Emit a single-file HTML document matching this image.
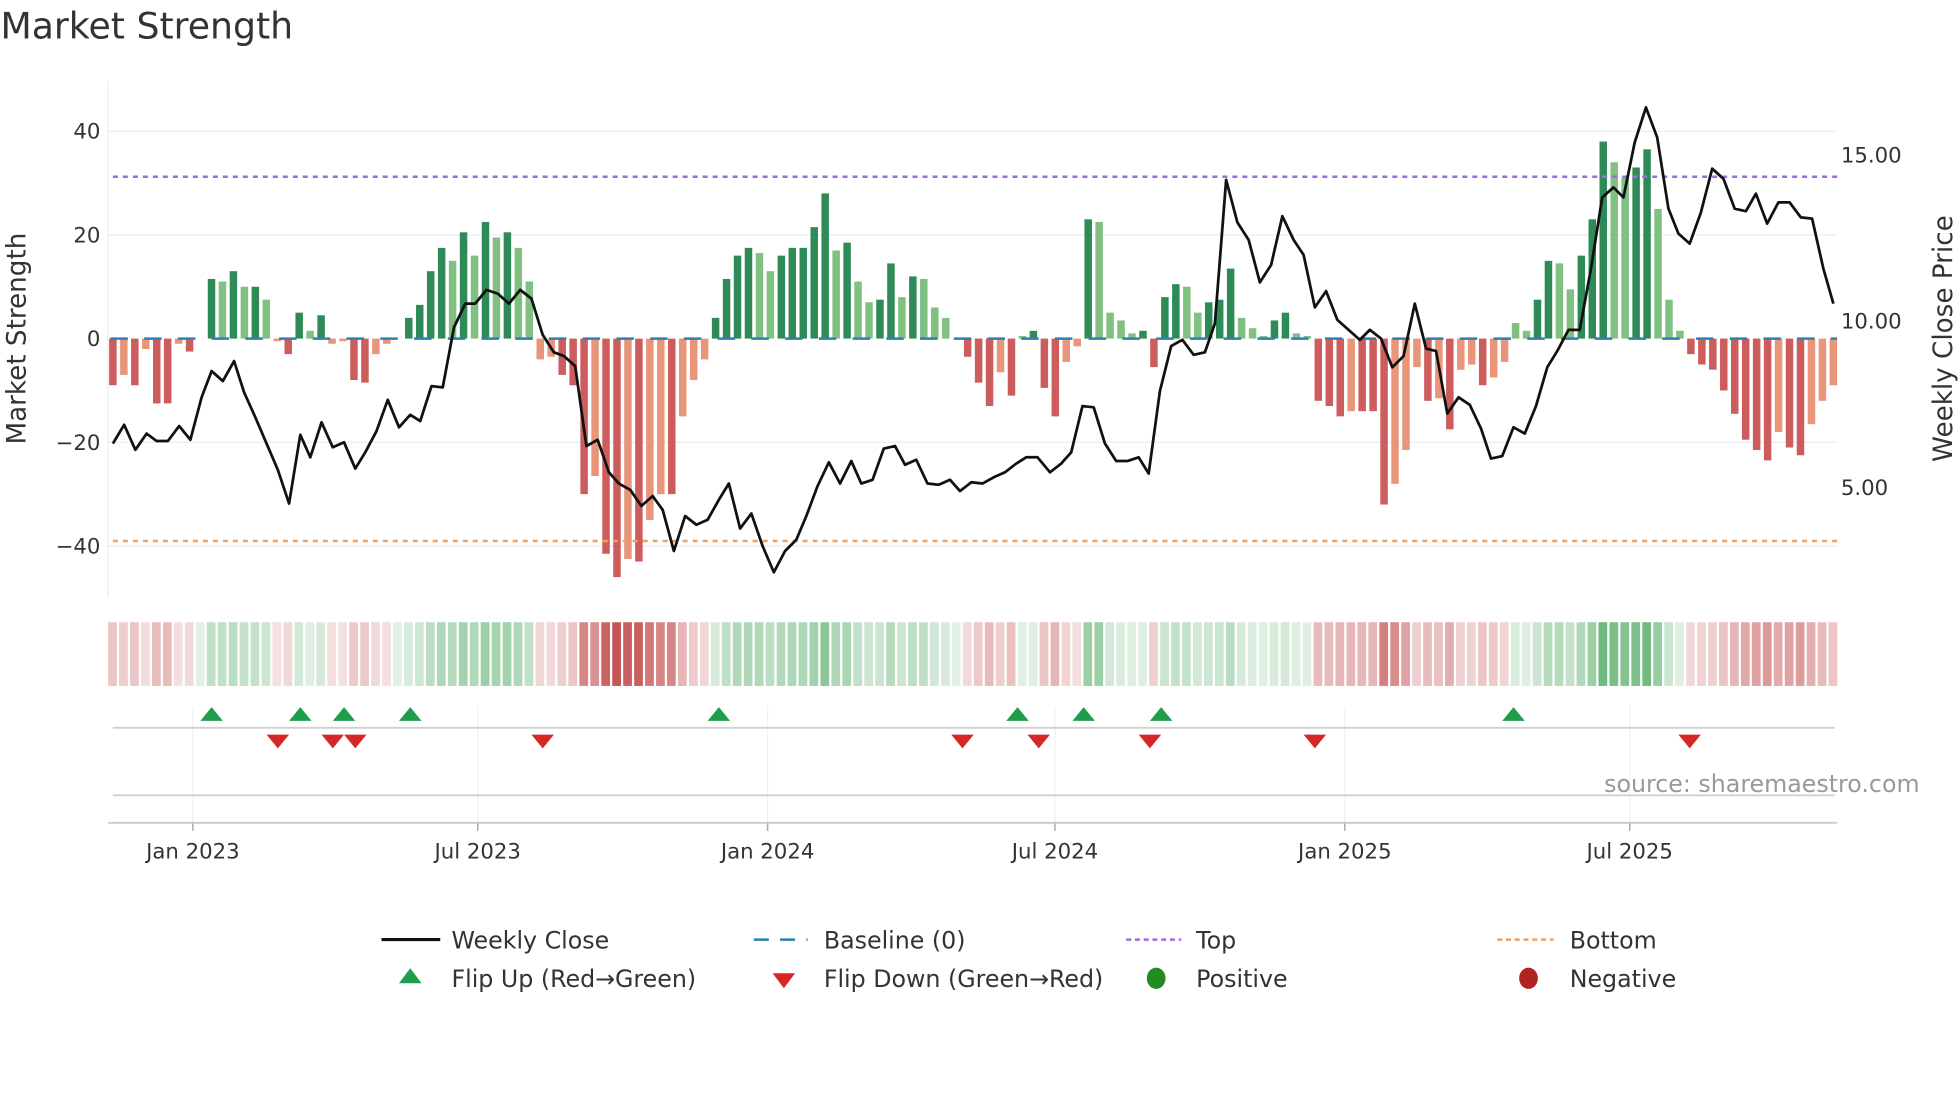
<!DOCTYPE html>
<html><head><meta charset="utf-8"><style>
html,body{margin:0;padding:0;background:#fff;width:1960px;height:1102px;overflow:hidden}
svg{display:block}
text{font-family:"DejaVu Sans","Liberation Sans",sans-serif;fill:#333}
</style></head><body>
<svg id="s" width="1960" height="1102" viewBox="0 0 1568 882" xmlns="http://www.w3.org/2000/svg">
<text x="0" y="31" font-size="29">Market Strength</text>
<g stroke="#ececf2" stroke-width="1">
<line x1="86" x2="1470" y1="105" y2="105"/><line x1="86" x2="1470" y1="188" y2="188"/>
<line x1="86" x2="1470" y1="354" y2="354"/><line x1="86" x2="1470" y1="437" y2="437"/>
<line x1="86" x2="86" y1="65" y2="478"/>
</g>
<g stroke="#eef0f6" stroke-width="1">
<line x1="154" x2="154" y1="565" y2="658"/><line x1="382" x2="382" y1="565" y2="658"/>
<line x1="614" x2="614" y1="565" y2="658"/><line x1="844" x2="844" y1="565" y2="658"/>
<line x1="1076" x2="1076" y1="565" y2="658"/><line x1="1304" x2="1304" y1="565" y2="658"/>
</g>
<g font-size="17" text-anchor="end">
<text x="80" y="111">40</text><text x="80" y="194">20</text><text x="80" y="277">0</text>
<text x="80" y="360">−20</text><text x="80" y="443">−40</text>
</g>
<g font-size="17">
<text x="1473" y="130">15.00</text><text x="1473" y="263">10.00</text><text x="1473" y="396">5.00</text>
</g>
<text font-size="21" text-anchor="middle" transform="translate(20,271) rotate(-90)">Market Strength</text>
<text font-size="21" text-anchor="middle" transform="translate(1562,271) rotate(-90)">Weekly Close Price</text>
<g id="bars"></g>
<line x1="88" x2="1470" y1="271" y2="271" stroke="#2f7fb0" stroke-width="2" stroke-dasharray="14,13" id="base"/>
<line x1="90" x2="1470" y1="141.5" y2="141.5" stroke="#9b6ee0" stroke-width="2" stroke-dasharray="4,4"/>
<line x1="90" x2="1470" y1="433" y2="433" stroke="#f0a060" stroke-width="2" stroke-dasharray="4,4"/>
<polyline id="price" fill="none" stroke="#111" stroke-width="2.2" stroke-linejoin="round"/>
<g id="band"></g>
<line x1="90" x2="1468" y1="582.5" y2="582.5" stroke="#d0d0d0" stroke-width="1.5"/>
<line x1="90" x2="1468" y1="636.5" y2="636.5" stroke="#d0d0d0" stroke-width="1.5"/>
<line x1="86" x2="1470" y1="658.5" y2="658.5" stroke="#ccc" stroke-width="1.5"/>
<g stroke="#aaa" stroke-width="1.2">
<line x1="154" x2="154" y1="659" y2="665"/><line x1="382" x2="382" y1="659" y2="665"/>
<line x1="614" x2="614" y1="659" y2="665"/><line x1="844" x2="844" y1="659" y2="665"/>
<line x1="1076" x2="1076" y1="659" y2="665"/><line x1="1304" x2="1304" y1="659" y2="665"/>
</g>
<g id="flips"></g>
<g font-size="17" text-anchor="middle">
<text x="154" y="687">Jan 2023</text><text x="382" y="687">Jul 2023</text><text x="614" y="687">Jan 2024</text>
<text x="844" y="687">Jul 2024</text><text x="1076" y="687">Jan 2025</text><text x="1304" y="687">Jul 2025</text>
</g>
<text x="1536" y="634" font-size="19" text-anchor="end" style="fill:#999">source: sharemaestro.com</text>
<g font-size="19">
<line x1="305" x2="352" y1="752" y2="752" stroke="#111" stroke-width="2.5"/>
<text x="361" y="759">Weekly Close</text>
<line x1="603" x2="646" y1="752" y2="752" stroke="#2f7fb0" stroke-width="2" stroke-dasharray="12,9"/>
<text x="659" y="759">Baseline (0)</text>
<line x1="901" x2="945" y1="752" y2="752" stroke="#9b6ee0" stroke-width="2" stroke-dasharray="4,3"/>
<text x="957" y="759">Top</text>
<line x1="1198" x2="1243" y1="752" y2="752" stroke="#f0a060" stroke-width="2" stroke-dasharray="4,3"/>
<text x="1256" y="759">Bottom</text>
<polygon points="319,787 337,787 328,775" fill="#1e9e4a"/>
<text x="361" y="790">Flip Up (Red→Green)</text>
<polygon points="618,779 636,779 627,791" fill="#d62728"/>
<text x="659" y="790">Flip Down (Green→Red)</text>
<ellipse cx="925" cy="783" rx="7.5" ry="8.5" fill="#228b22"/>
<text x="957" y="790">Positive</text>
<ellipse cx="1223" cy="783" rx="7.5" ry="8.5" fill="#b22222"/>
<text x="1256" y="790">Negative</text>
</g>
</svg>
<script>
var v=[-9,-7,-9,-2,-12.5,-12.5,-1,-2.5,0,11.5,11,13,10,10,7.5,-0.5,-3,5,1.5,4.5,-1,-0.5,-8,-8.5,-3,-1,0,4,6.5,13,17.5,15,20.5,16,22.5,19.5,20.5,17.5,11,-4,-3.5,-7,-9,-30,-26.5,-41.5,-46,-42.5,-43,-35,-30,-30,-15,-8,-4,4,11.5,16,17.5,16.5,13,16,17.5,17.5,21.5,28,17,18.5,11,7,7.5,14.5,8,12,11.5,6,4,0,-3.5,-8.5,-13,-6.5,-11,0.5,1.5,-9.5,-15,-4.5,-1.5,23,22.5,5,3.5,1,1.5,-5.5,8,10.5,10,5,7,7.5,13.5,4,2,0.5,3.5,5,1,0.5,-12,-13,-15,-14,-14,-14,-32,-28,-21.5,-5.5,-12,-11.5,-17.5,-6,-5,-9,-7.5,-4.5,3,1.5,7.5,15,14.5,9.5,16,23,38,34,31,33,36.5,25,7.5,1.5,-3,-5,-6,-10,-14.5,-19.5,-21.5,-23.5,-18,-21,-22.5,-16.5,-12,-9];
var N=v.length,x0=90,dx=(1467-90)/(N-1),ns="http://www.w3.org/2000/svg";
function el(t,a,p){var e=document.createElementNS(ns,t);for(var k in a)e.setAttribute(k,a[k]);p.appendChild(e);return e;}
var B=document.getElementById('bars'),D=document.getElementById('band');
for(var i=0;i<N;i++){var x=x0+i*dx,val=v[i],prev=i?v[i-1]:0,h=Math.abs(val)*4.15;
var strong=Math.abs(val)>=Math.abs(prev);
var c=val>=0?(strong?'#2e8b57':'#80c080'):(strong?'#cd5c5c':'#e8957a');
if(h>0.3)el('rect',{x:x-3,y:val>=0?271-h:271,width:6,height:h,fill:c},B);
var a=Math.min(0.9,0.15+Math.abs(val)/45*0.7);
var bc=val>=0?'rgba(60,160,80,'+a.toFixed(2)+')':'rgba(190,60,60,'+a.toFixed(2)+')';
el('rect',{x:x-3.8,y:498,width:7,height:51,fill:bc},D);}
var p=[90,355,99,340,108,360,117,347,125,353,134,353,143,341,152,352,161,318,169,297,178,305,187,289,195,314,204,334,213,355,222,376,231,403,240,348,248,366,257,338,266,358,275,354,284,375,292,362,301,345,310,320,319,342,328,332,336,337,345,309,354,310,363,262,372,243,380,243,389,232,398,235,407,243,416,232,425,239,434,268,443,282,451,285,460,293,469,357,478,352,487,378,495,387,504,392,513,405,522,397,530,408,539,441,548,413,557,420,566,416,575,400,583,387,592,423,601,411,610,437,619,458,628,441,637,432,645,413,654,389,663,370,672,387,681,369,689,387,698,384,707,359,716,357,724,372,733,368,742,387,751,388,760,384,768,393,777,386,786,387,795,382,804,378,813,371,821,366,830,366,840,378,849,371,857,362,866,325,875,326,884,355,893,369,902,369,911,366,919,379,928,313,937,277,946,272,955,284,964,282,972,259,981,144,990,178,999,192,1008,226,1017,212,1026,173,1035,192,1043,204,1052,246,1061,233,1070,256,1079,264,1088,272,1096,264,1105,271,1114,294,1123,285,1132,243,1141,279,1149,281,1158,331,1167,318,1176,324,1185,343,1193,367,1202,365,1211,342,1220,347,1229,325,1238,294,1246,281,1255,264,1264,264,1273,215,1282,158,1291,150,1299,158,1308,114,1317,86,1326,110,1335,167,1343,187,1352,195,1361,170,1370,135,1379,143,1388,167,1397,169,1405,155,1414,179,1423,162,1432,162,1441,174,1450,175,1459,215,1467,243];
var s='';for(var j=0;j<p.length;j+=2)s+=p[j]+','+p[j+1]+' ';
document.getElementById('price').setAttribute('points',s);
var F=document.getElementById('flips');
[169,240,275,328,575,814,867,929,1211].forEach(function(x){el('polygon',{points:(x-9)+',577 '+(x+9)+',577 '+x+',566',fill:'#1e9e4a'},F);});
[222,266,284,434,770,831,920,1052,1352].forEach(function(x){el('polygon',{points:(x-9)+',588 '+(x+9)+',588 '+x+',599',fill:'#d62728'},F);});
</script>
</body></html>
